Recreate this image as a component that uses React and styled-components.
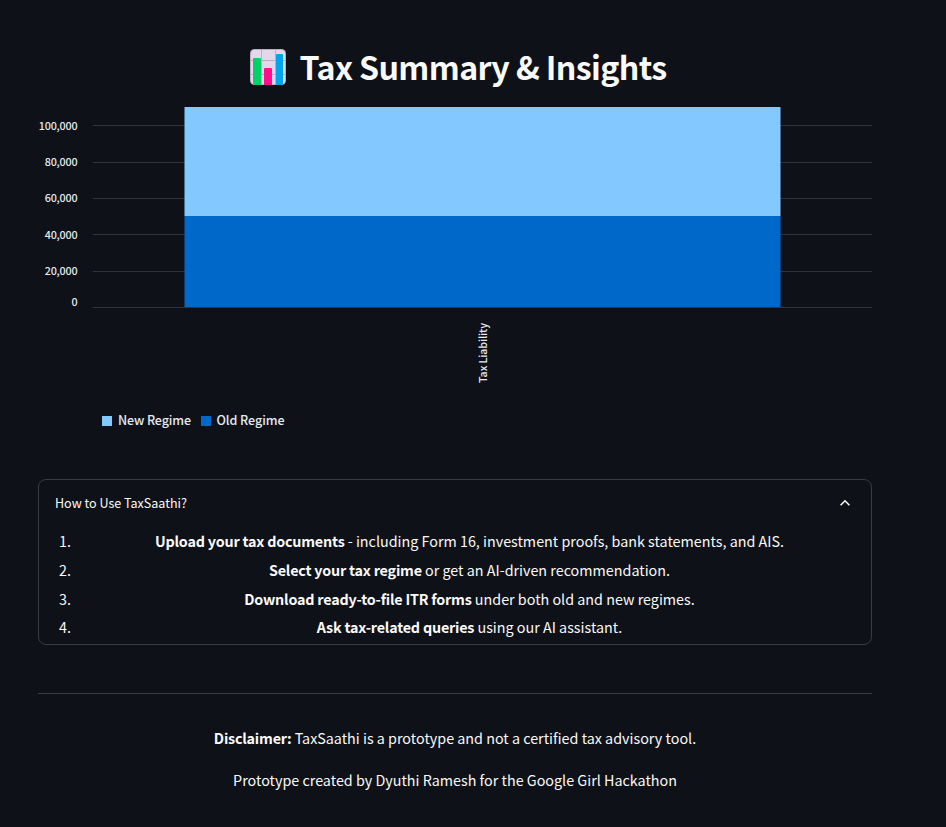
import React from "react";
import styled, { createGlobalStyle } from "styled-components";

const GlobalStyle = createGlobalStyle`
  *, *::before, *::after { box-sizing: border-box; }
  body {
    margin: 0;
    background: #0e1117;
    color: #fafafa;
    font-family: "Source Sans Pro", "Noto Sans CJK SC", "Noto Sans", sans-serif;
  }
`;

const Page = styled.main`
  width: 946px;
  height: 827px;
  padding: 42px 74px 0 38px;
  overflow: hidden;
  background: #0e1117;
`;

const Title = styled.h1`
  display: flex;
  justify-content: center;
  align-items: center;
  gap: 14px;
  height: 48px;
  margin: 0 0 17px;
  padding-left: 6px;
  font-size: 32.2px;
  font-weight: 700;
  line-height: 48px;
  letter-spacing: -0.64px;
  white-space: nowrap;
`;

const TitleIcon = styled.svg`
  flex: none;
  width: 36px;
  height: 36px;
  margin-top: 2px;
`;

const Chart = styled.svg`
  display: block;
  width: 834px;
  height: 333px;
`;

const AxisLabel = styled.text`
  fill: #e6eaf1;
  font-size: 10.75px;
  font-weight: 500;
  letter-spacing: ${(p) => p.$track || 0}px;
`;

const LegendLabel = styled(AxisLabel)`
  font-size: 12.5px;
`;

const Expander = styled.section`
  height: 166px;
  margin-top: 39px;
  border: 1px solid #3a3c42;
  border-radius: 8px;
`;

const ExpanderHeader = styled.header`
  display: flex;
  align-items: center;
  justify-content: space-between;
  height: 46px;
  padding: 0 20px 0 16px;
  font-size: 12.54px;
  line-height: 20px;
`;

const Chevron = styled.svg`
  width: 12px;
  height: 12px;
`;

const Steps = styled.ol`
  margin: 0;
  padding: 0 16px;
  list-style: none;
`;

const Step = styled.li`
  display: grid;
  grid-template-columns: 29px 1fr;
  height: 28.8px;
  font-size: 14.33px;
  line-height: 29px;
`;

const StepNumber = styled.span`
  padding-left: 4px;
`;

const Line = styled.span`
  text-align: center;
  white-space: nowrap;
`;

const Strong = styled.strong`
  font-weight: 700;
  letter-spacing: -0.2px;
`;

const Divider = styled.hr`
  height: 1px;
  margin: 48px 0 31px;
  border: 0;
  background: #3a3c42;
`;

const Note = styled.p`
  margin: 0 0 16px;
  font-size: 14.33px;
  line-height: 26px;
  text-align: center;
`;

const ticks = [
  { label: "100,000", line: 18, text: 23 },
  { label: "80,000", line: 55, text: 59 },
  { label: "60,000", line: 91, text: 95 },
  { label: "40,000", line: 127, text: 132 },
  { label: "20,000", line: 164, text: 168 },
  { label: "0", line: 200, text: 199 },
];

const steps = [
  ["Upload your tax documents", " - including Form 16, investment proofs, bank statements, and AIS."],
  ["Select your tax regime", " or get an AI-driven recommendation."],
  ["Download ready-to-file ITR forms", " under both old and new regimes."],
  ["Ask tax-related queries", " using our AI assistant."],
];

function BarChartIcon() {
  return (
    <TitleIcon viewBox="0 0 36 36" aria-hidden="true">
      <rect width="36" height="36" rx="4.5" fill="#b8aebe" />
      <rect x="1" y="1" width="34" height="34" rx="3.5" fill="#e1d8ec" />
      <path d="M11.5 1V35M25.5 1V35M1 11.5H35M1 25.5H35" stroke="#b8aebe" />
      <path d="M3 35V10a1 1 0 0 1 1-1h6a1 1 0 0 1 1 1v26H5z" fill="#00d26a" />
      <path d="M14 36V20a1 1 0 0 1 1-1h6a1 1 0 0 1 1 1v16z" fill="#ff0f8d" />
      <path d="M26 36V6a1 1 0 0 1 1-1h5a1 1 0 0 1 1 1v29l-1 1z" fill="#00a6ed" />
    </TitleIcon>
  );
}

function TaxChart() {
  return (
    <Chart viewBox="0 0 834 333" role="img" aria-label="Tax liability by regime">
      {ticks.map((t) => (
        <rect key={t.label} x="55" y={t.line} width="779" height="1" fill="#31333c" />
      ))}
      <rect x="146.5" y="0" width="596" height="109" fill="#83c9ff" />
      <rect x="146.5" y="109" width="596" height="91" fill="#0068c9" />
      {ticks.map((t) => (
        <AxisLabel key={t.label} x="39.4" y={t.text} textAnchor="end" $track={-0.2}>
          {t.label}
        </AxisLabel>
      ))}
      <AxisLabel transform="translate(449 276) rotate(-90)" textLength="60">
        Tax Liability
      </AxisLabel>
      <rect x="64" y="309" width="10" height="10" fill="#83c9ff" />
      <LegendLabel x="80" y="318" textLength="73">New Regime</LegendLabel>
      <rect x="163" y="309" width="10" height="10" fill="#0068c9" />
      <LegendLabel x="178.5" y="318" textLength="68">Old Regime</LegendLabel>
    </Chart>
  );
}

export default function App() {
  return (
    <>
      <GlobalStyle />
      <Page>
        <Title>
          <BarChartIcon />
          <span>Tax Summary &amp; Insights</span>
        </Title>
        <TaxChart />
        <Expander>
          <ExpanderHeader>
            <Line>How to Use TaxSaathi?</Line>
            <Chevron viewBox="0 0 12 12" aria-hidden="true">
              <path d="M1.6 8.2 6 3.8l4.4 4.4" fill="none" stroke="#fafafa" strokeWidth="1.6" />
            </Chevron>
          </ExpanderHeader>
          <Steps>
            {steps.map(([lead, rest], i) => (
              <Step key={lead}>
                <StepNumber>{i + 1}.</StepNumber>
                <Line>
                  <Strong>{lead}</Strong>
                  {rest}
                </Line>
              </Step>
            ))}
          </Steps>
        </Expander>
        <Divider />
        <Note>
          <Line>
            <Strong>Disclaimer:</Strong> TaxSaathi is a prototype and not a certified tax advisory tool.
          </Line>
        </Note>
        <Note>
          <Line>Prototype created by Dyuthi Ramesh for the Google Girl Hackathon</Line>
        </Note>
      </Page>
    </>
  );
}
